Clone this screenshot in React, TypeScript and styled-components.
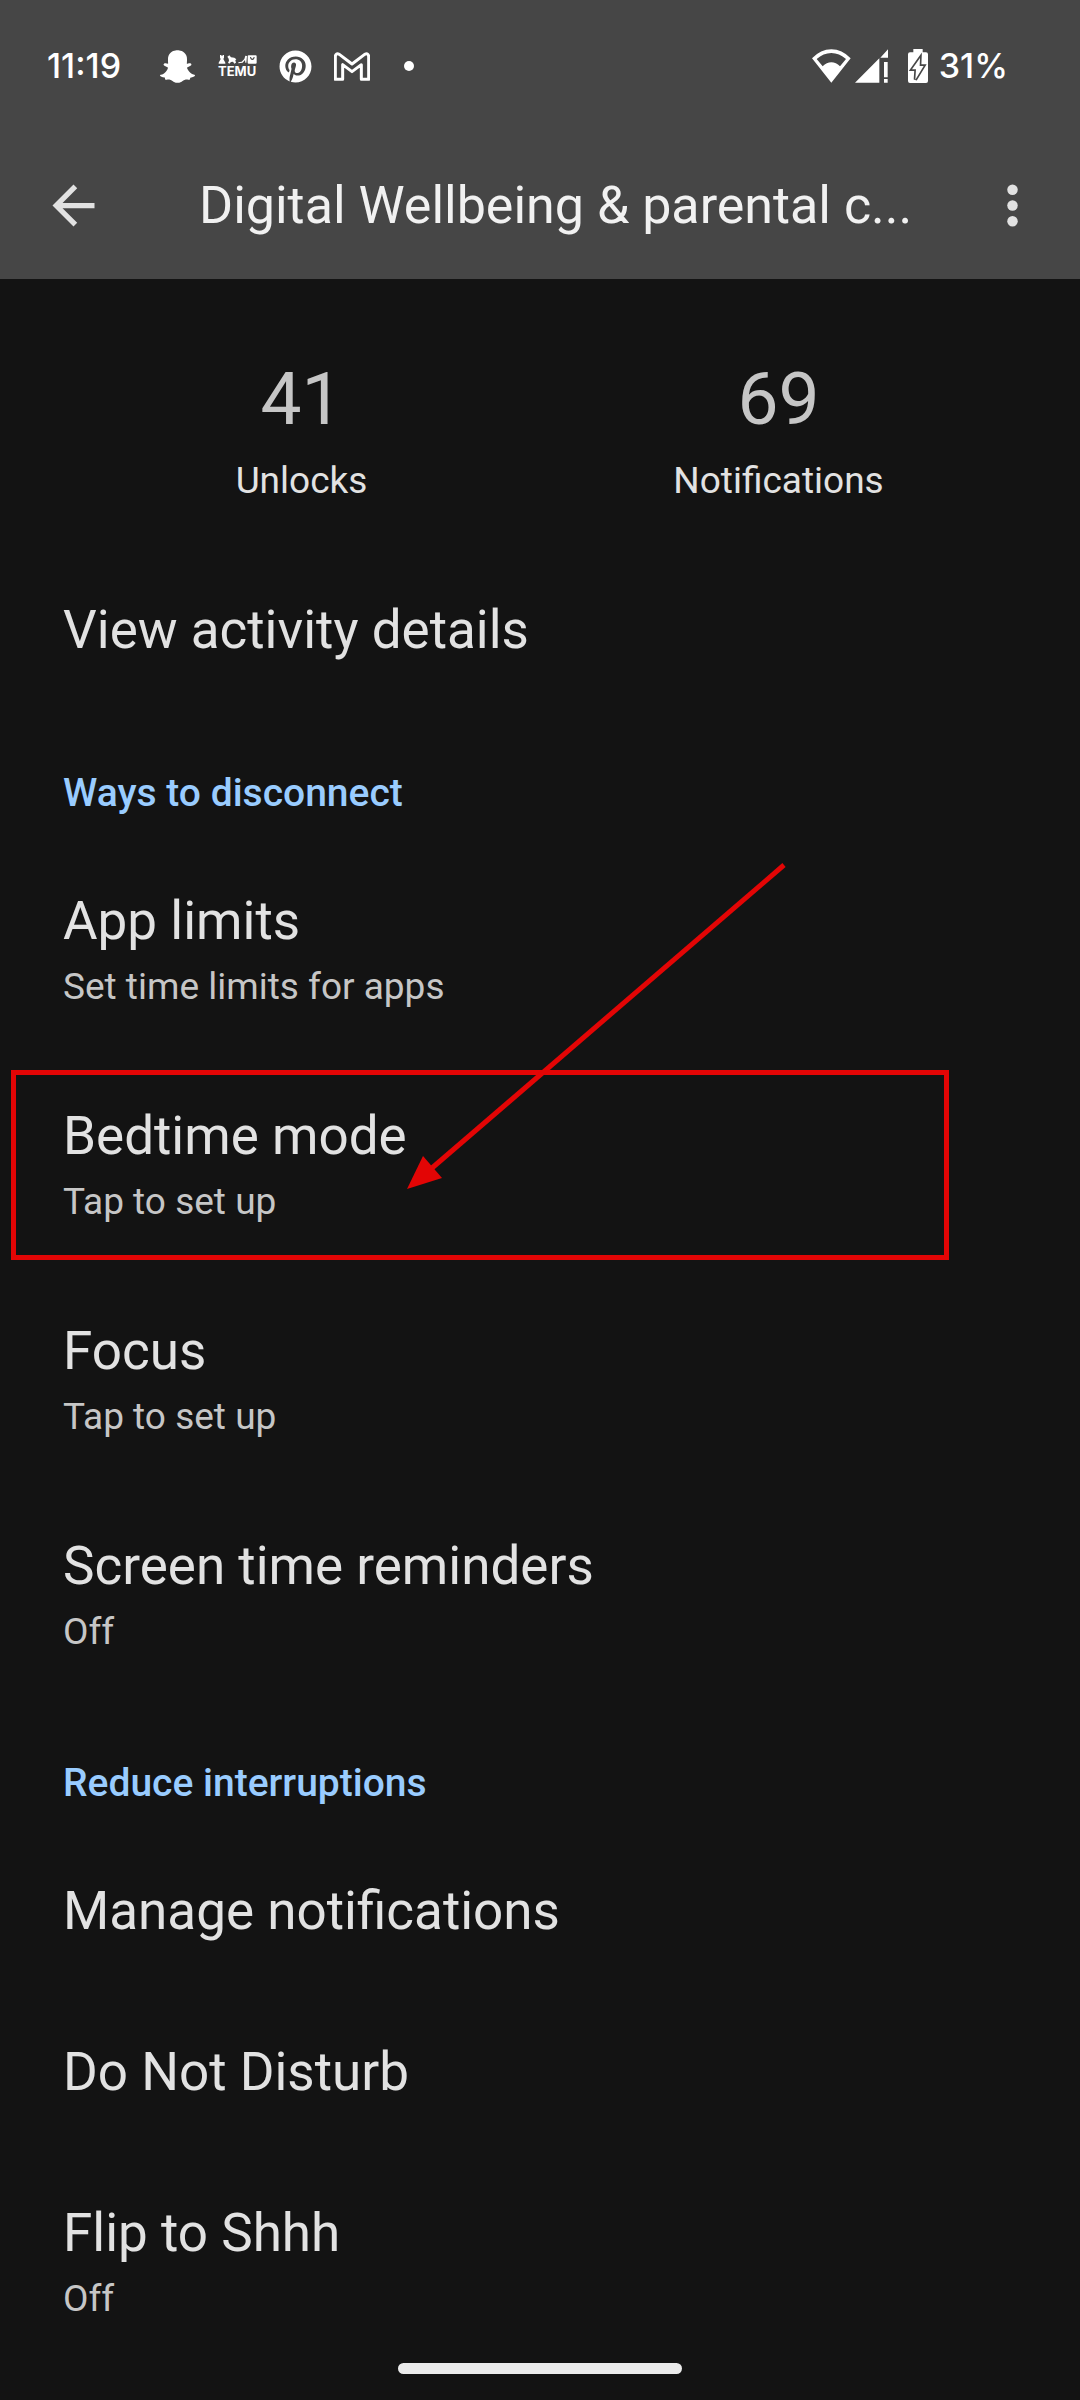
import React from "react";
import styled, { createGlobalStyle } from "styled-components";
import { FaPinterest } from "react-icons/fa";
import { SiSnapchat } from "react-icons/si";

const color = {
  bar: "#464646",
  page: "#131313",
  heading: "#f1f1f1",
  text: "#e2e2e2",
  muted: "#c6c6c6",
  accent: "#99ccff",
  mark: "#e30505",
};

const GlobalStyle = createGlobalStyle`
  * { box-sizing: border-box; }
  body {
    margin: 0;
    background: ${color.page};
    color: ${color.text};
    font-family: Roboto, "Liberation Sans", sans-serif;
  }
  h1, h2, dl, dt, dd, ul { margin: 0; padding: 0; font-weight: 400; }
  svg { display: block; flex: none; }
`;

const Screen = styled.div`
  display: flex;
  flex-direction: column;
  min-height: 100vh;
`;

const TopArea = styled.header`
  background: ${color.bar};
`;

const StatusBar = styled.div`
  display: flex;
  align-items: center;
  justify-content: space-between;
  height: 132px;
  padding: 0 72px 0 47px;
  color: #fff;
  font-family: Inter, "Liberation Sans", sans-serif;
  font-size: 34px;
  font-weight: 500;
  line-height: 44px;
`;

const StatusGroup = styled.div<{ $gap: number }>`
  display: flex;
  align-items: center;
  gap: ${(p) => p.$gap}px;
`;

const Clock = styled.time`
  margin-right: 17px;
`;

const Battery = styled.span`
  display: flex;
  align-items: center;
  gap: 11px;
  margin-left: 16px;
`;

const TemuMark = styled.span`
  display: flex;
  flex-direction: column;
  align-items: center;
  gap: 1px;
  width: 40px;
  font-size: 13px;
  font-weight: 700;
  line-height: 12px;
`;

const MoreDot = styled.span`
  width: 10px;
  height: 10px;
  margin-left: 12px;
  border-radius: 50%;
  background: currentColor;
`;

const Toolbar = styled.div`
  display: flex;
  align-items: center;
  height: 147px;
  padding: 0 36px 0 42px;
`;

const IconButton = styled.button`
  display: flex;
  padding: 0;
  border: 0;
  background: none;
  color: ${color.text};
  cursor: pointer;
`;

const Title = styled.h1`
  flex: 1;
  min-width: 0;
  padding: 0 60px 0 94px;
  color: ${color.heading};
  font-size: 52px;
  line-height: 60px;
  white-space: nowrap;
`;

const Stats = styled.dl`
  display: grid;
  grid-template-columns: 1fr 1fr;
  padding: 77px 63px 47px;
`;

const Stat = styled.div`
  display: flex;
  flex-direction: column-reverse;
  align-items: center;
  gap: 17px;
`;

const StatLabel = styled.dt`
  font-size: 37px;
  line-height: 44px;
`;

const StatValue = styled.dd`
  color: ${color.muted};
  font-size: 73px;
  line-height: 86px;
`;

const SectionTitle = styled.h2`
  padding: 60px 63px 26px;
  color: ${color.accent};
  font-size: 39px;
  font-weight: 500;
  line-height: 44px;
`;

const List = styled.ul`
  list-style: none;
`;

const Item = styled.li`
  position: relative;
`;

const Row = styled.button`
  display: flex;
  flex-direction: column;
  gap: 12px;
  width: 100%;
  min-height: 161px;
  padding: 48px 63px 47px;
  border: 0;
  background: none;
  color: ${color.text};
  font-family: inherit;
  text-align: left;
  cursor: pointer;
`;

const RowTitle = styled.span`
  font-size: 53px;
  line-height: 64px;
`;

const RowSummary = styled.span`
  color: ${color.muted};
  font-size: 37px;
  line-height: 44px;
`;

const HighlightBox = styled.div`
  position: absolute;
  top: 14px;
  right: 131px;
  bottom: 11px;
  left: 11px;
  border: 5px solid ${color.mark};
  pointer-events: none;
`;

const HighlightArrow = styled.svg`
  position: absolute;
  bottom: 82px;
  left: 407px;
  pointer-events: none;
`;

const GestureBar = styled.div`
  position: fixed;
  bottom: 26px;
  left: 50%;
  width: 284px;
  height: 11px;
  margin-left: -142px;
  border-radius: 6px;
  background: #ebebeb;
`;

const TemuIcon = () => (
  <TemuMark>
    <svg width="39" height="9" viewBox="0 0 117 27" fill="currentColor" aria-hidden="true">
      <path d="M6 0h3l3 3 3-3h3v8l-2 4 6 11v3H2v-3l6-11-2-4z" />
      <path d="M28 5l6-4 5 6 10 1 6 5-3 3 2 7-5 3-4-6-6 1-5 5-4-3 3-6-1-6z" />
      <path d="M61 22l10-2 8-8 3-10 5 1-2 20h-3l-1-8-7 8-13 2z" />
      <path fillRule="evenodd" d="M92 1h21q3 0 3 3v19q0 3-3 3H92q-3 0-3-3V4q0-3 3-3zm4 5q1 9 7 9t7-9h-3q-1 5-4 5t-4-5z" />
    </svg>
    <span>TEMU</span>
  </TemuMark>
);

const GmailIcon = () => (
  <svg width="36" height="29" viewBox="282 65 108 87" fill="none" stroke="currentColor" strokeWidth="9" strokeLinejoin="round" aria-hidden="true">
    <path d="M298 72l38 29 38-29q12-5 12 8v67h-22v-44l-28 21-28-21v44h-22V80q0-13 12-8z" />
  </svg>
);

const WifiIcon = () => (
  <svg width="39" height="34" viewBox="45 56 117 102" fill="currentColor" aria-hidden="true">
    <path fillRule="evenodd" d="M45 84Q71 57 103 57t58 27l-58 73zM59 86l18 22q12-12 26-12t26 12l18-22q-20-18-44-18t-44 18z" />
  </svg>
);

const SignalIcon = () => (
  <svg width="33" height="34" viewBox="172 56 99 102" fill="currentColor" aria-hidden="true">
    <path d="M172 157l73-73v73zM248 82l23-25v25zM259 95h11v46h-11zM259 146h11v11h-11z" />
  </svg>
);

const BatteryIcon = () => (
  <svg width="20" height="34" viewBox="327 57 60 102" aria-hidden="true">
    <path fill="currentColor" d="M343 57h28v10h10q6 0 6 6v80q0 6-6 6h-48q-6 0-6-6V73q0-6 6-6h10z" />
    <path fill="currentColor" stroke={color.bar} strokeWidth="10" paintOrder="stroke" d="M363 84l-24 34h12l-2 31 25-41h-12z" />
  </svg>
);

const BackIcon = () => (
  <svg width="63" height="63" viewBox="0 0 24 24" fill="currentColor" aria-hidden="true">
    <path d="M20 11H7.83l5.59-5.59L12 4l-8 8 8 8 1.41-1.41L7.83 13H20v-2z" />
  </svg>
);

const MoreIcon = () => (
  <svg width="63" height="63" viewBox="0 0 24 24" fill="currentColor" aria-hidden="true">
    <circle cx="12" cy="6" r="2" />
    <circle cx="12" cy="12" r="2" />
    <circle cx="12" cy="18" r="2" />
  </svg>
);

interface Setting {
  title: string;
  summary?: string;
  highlighted?: boolean;
}

const disconnect: Setting[] = [
  { title: "App limits", summary: "Set time limits for apps" },
  { title: "Bedtime mode", summary: "Tap to set up", highlighted: true },
  { title: "Focus", summary: "Tap to set up" },
  { title: "Screen time reminders", summary: "Off" },
];

const interruptions: Setting[] = [
  { title: "Manage notifications" },
  { title: "Do Not Disturb" },
  { title: "Flip to Shhh", summary: "Off" },
];

const SettingsList = ({ items }: { items: Setting[] }) => (
  <List>
    {items.map((item) => (
      <Item key={item.title}>
        <Row type="button">
          <RowTitle>{item.title}</RowTitle>
          {item.summary && <RowSummary>{item.summary}</RowSummary>}
        </Row>
        {item.highlighted && (
          <>
            <HighlightBox />
            <HighlightArrow width="380" height="327" viewBox="0 0 380 327" aria-hidden="true">
              <path d="M377 3L25 306" stroke={color.mark} strokeWidth="5" />
              <path d="M0 327l16-33 19 22z" fill={color.mark} />
            </HighlightArrow>
          </>
        )}
      </Item>
    ))}
  </List>
);

export default function App() {
  return (
    <Screen>
      <GlobalStyle />
      <TopArea>
        <StatusBar>
          <StatusGroup $gap={22}>
            <Clock>11:19</Clock>
            <SiSnapchat size={35} />
            <TemuIcon />
            <FaPinterest size={33} />
            <GmailIcon />
            <MoreDot />
          </StatusGroup>
          <StatusGroup $gap={4}>
            <WifiIcon />
            <SignalIcon />
            <Battery>
              <BatteryIcon />
              31%
            </Battery>
          </StatusGroup>
        </StatusBar>
        <Toolbar>
          <IconButton type="button" aria-label="Back">
            <BackIcon />
          </IconButton>
          <Title>Digital Wellbeing &amp; parental c...</Title>
          <IconButton type="button" aria-label="More options">
            <MoreIcon />
          </IconButton>
        </Toolbar>
      </TopArea>
      <main>
        <Stats>
          <Stat>
            <StatLabel>Unlocks</StatLabel>
            <StatValue>41</StatValue>
          </Stat>
          <Stat>
            <StatLabel>Notifications</StatLabel>
            <StatValue>69</StatValue>
          </Stat>
        </Stats>
        <SettingsList items={[{ title: "View activity details" }]} />
        <SectionTitle>Ways to disconnect</SectionTitle>
        <SettingsList items={disconnect} />
        <SectionTitle>Reduce interruptions</SectionTitle>
        <SettingsList items={interruptions} />
      </main>
      <GestureBar />
    </Screen>
  );
}
